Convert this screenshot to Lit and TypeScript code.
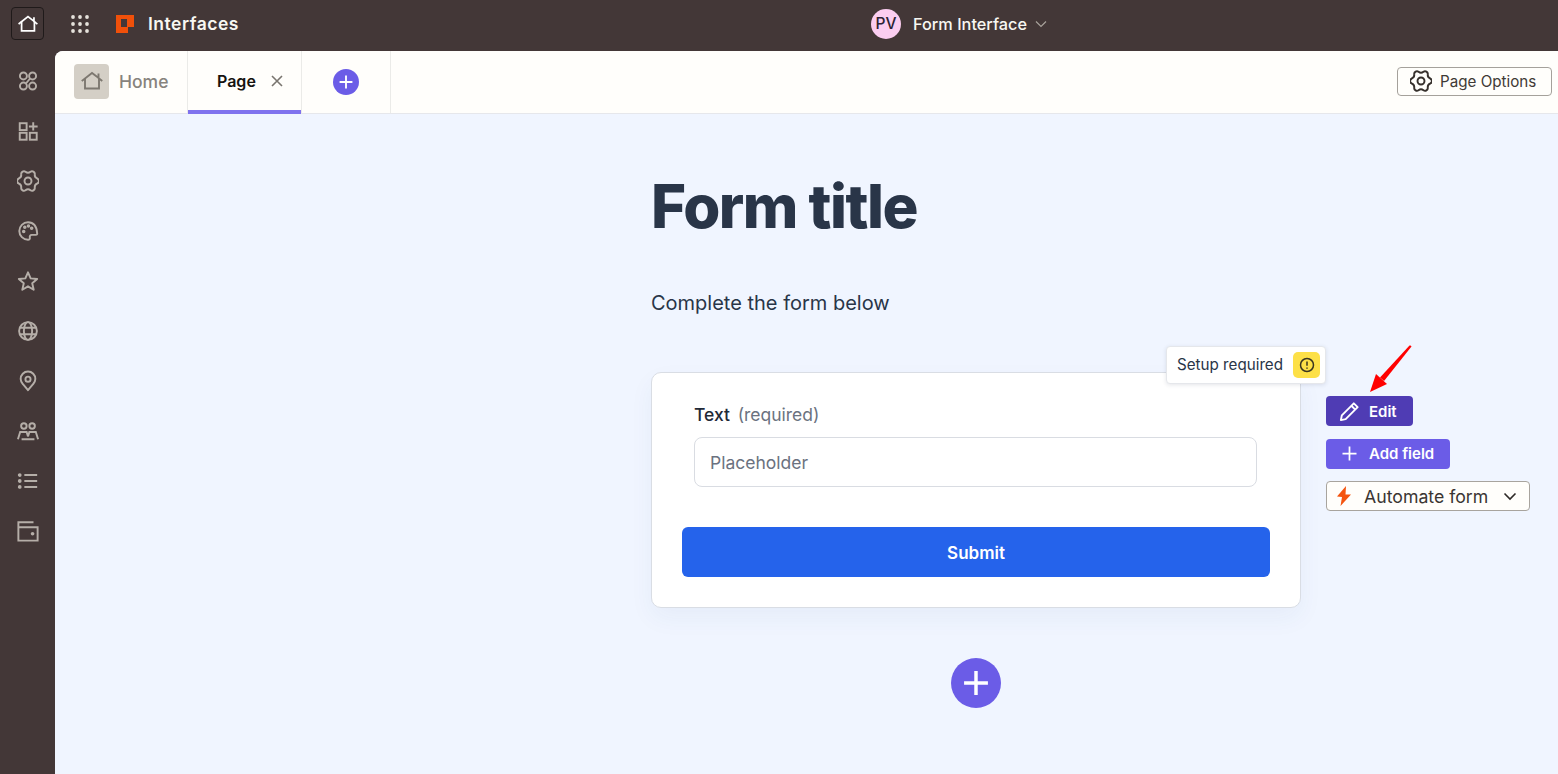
import { LitElement, html, css, svg } from "lit";
import { customElement } from "lit/decorators.js";

const house = html`<svg viewBox="0 0 24 24" fill="none" stroke="currentColor" stroke-width="1.900" stroke-linejoin="miter" stroke-linecap="square"><path d="M2.500 11.500 12 4l6 4.600M18.500 5.500v3.600L21.500 11.500" /><path d="M5 10v9.500h14V10" /></svg>`;

const polar = (deg: number, r: number) => {
  const a = (deg * Math.PI) / 180;
  return `${(12 + r * Math.cos(a)).toFixed(2)} ${(12 + r * Math.sin(a)).toFixed(2)}`;
};

const gearPath = () => {
  let d = `M${polar(-15, 10.5)}`;
  for (let i = 0; i < 6; i++) {
    const a = i * 60;
    d += ` A3 3 0 0 1 ${polar(a + 15, 10.5)} Q${polar(a + 30, 8)} ${polar(a + 45, 10.5)}`;
  }
  return d + "Z";
};

const gear = svg`<path d=${gearPath()} stroke-linejoin="round" /><circle cx="12" cy="12" r="3.800" />`;

const sideIcons = [
  svg`<circle cx="7" cy="6.500" r="3.800" /><circle cx="17" cy="6.500" r="3.800" /><circle cx="7" cy="17.500" r="3.800" /><circle cx="17" cy="17.500" r="3.800" /><path d="M9.500 15l5-6" />`,
  svg`<rect x="3" y="3.500" width="7.500" height="7.500" /><rect x="3" y="14" width="7.500" height="7.500" /><rect x="14" y="14" width="7.500" height="7.500" /><path d="M17.700 2.500v9M13 7h9.500" />`,
  gear,
  svg`<path d="M12 2.500a9.500 9.500 0 1 0 0 19c1.600 0 2.300-1 2-2.300-.4-1.600.4-3 2-3h4.700c1 0 1.500-.7 1.300-1.700C21.600 8.500 19 2.500 12 2.500z" /><circle cx="7.300" cy="12.500" r=".9" /><circle cx="8.500" cy="8" r=".9" /><circle cx="12.500" cy="6.500" r=".9" /><circle cx="16" cy="9" r=".9" />`,
  svg`<path d="M12 2.500l2.900 6.600 7.100.7-5.400 4.700 1.600 7-6.200-3.700-6.200 3.700 1.600-7L2 9.800l7.100-.7z" stroke-linejoin="round" />`,
  svg`<circle cx="12" cy="12" r="9.700" /><ellipse cx="12" cy="12" rx="4.500" ry="9.700" /><path d="M3 8.500h18M3 15.500h18" />`,
  svg`<path d="M12 22l-5.500-6.500a8 8 0 1 1 11 0L12 22z" stroke-linejoin="round" /><circle cx="12" cy="10" r="2.800" />`,
  svg`<circle cx="7.500" cy="6.500" r="3" /><circle cx="16.500" cy="6.500" r="3" /><path d="M1 21l2.500-8h7l1.500 5M5 21h7M23 21l-2.500-8h-7l-1.500 5M12 21h7" />`,
  svg`<path d="M8 5.500h14M8 12h14M8 18.500h14" /><circle cx="3" cy="5.500" r="1" fill="currentColor" /><circle cx="3" cy="12" r="1" fill="currentColor" /><circle cx="3" cy="18.500" r="1" fill="currentColor" />`,
  svg`<path d="M18 2.500H1.500v20h21V8H1.500" /><circle cx="17" cy="15" r="2" fill="currentColor" stroke="none" />`,
];

@customElement("app-root")
export class AppRoot extends LitElement {
  static styles = css`
    :host {
      display: grid;
      grid-template-columns: 55px 1fr;
      grid-template-rows: 51px 1fr;
      height: 774px;
      overflow: hidden;
      background: #433737;
      font-family: Inter, "Liberation Sans", sans-serif;
      color: #1f2937;
    }
    svg { display: block; }
    .top {
      grid-column: 1 / 3;
      display: grid;
      grid-template-columns: 860px auto;
      align-items: center;
      padding: 0 0 4px 11px;
    }
    .top-left { display: flex; align-items: center; }
    .home-btn {
      width: 33px; height: 33px; box-sizing: border-box;
      border: 1px solid #1f1a1a;
      border-radius: 4px;
      display: flex; align-items: center; justify-content: center;
      color: #fff;
    }
    .home-btn svg { width: 22px; height: 22px; }
    .grid-ic { margin-left: 27px; width: 18px; height: 18px; color: #e6e2dc; }
    .logo { margin-left: 27px; width: 18px; height: 18px; }
    .brand { margin-left: 14px; font-size: 17.500px; font-weight: 600; color: #f8f7f2; letter-spacing: .5px; }
    .top-mid { display: flex; align-items: center; }
    .avatar {
      width: 30px; height: 30px; border-radius: 50%;
      background: #fbcdf0; color: #2a2233;
      display: flex; align-items: center; justify-content: center;
      font-size: 15.500px; font-weight: 500;
    }
    .iface { margin-left: 12px; font-size: 16.300px; font-weight: 500; color: #f8f7f2; }
    .iface-chev { margin-left: 8px; width: 12px; height: 12px; color: #a8a29b; }
    .side {
      display: flex; flex-direction: column; align-items: center;
      padding-top: 19px; gap: 28px;
      color: #b5aea8;
    }
    .side svg { width: 22px; height: 22px; fill: none; stroke: currentColor; stroke-width: 2.100; }
    .main {
      background: #f0f5ff;
      border-top-left-radius: 8px;
      overflow: hidden;
      display: flex; flex-direction: column;
    }
    .tabs {
      height: 63px; box-sizing: border-box;
      background: #fffefb;
      border-bottom: 1px solid #e6e7eb;
      display: flex; align-items: stretch;
      flex: none;
    }
    .tab { display: flex; align-items: center; border-right: 1px solid #ebebe8; box-sizing: border-box; }
    .tab-home { width: 133px; padding: 0 0 2px 19px; gap: 10px; color: #87837d; font-size: 17.500px; font-weight: 500; }
    .home-ic {
      width: 35px; height: 35px; background: #d4cfc6; border-radius: 4px;
      display: flex; align-items: center; justify-content: center; color: #7d7870;
    }
    .home-ic svg { width: 24px; height: 24px; }
    .tab-page {
      width: 114px; padding: 0 0 3px 29px; gap: 15px;
      font-size: 16px; font-weight: 600; color: #16130f;
      box-shadow: inset 0 -4px 0 #7f72ee;
      margin-bottom: -1px;
    }
    .tab-page svg { width: 12px; height: 12px; color: #79756f; }
    .tab-add { width: 89px; justify-content: center; padding-bottom: 1px; }
    .tab-add .dot { width: 26px; height: 26px; }
    .dot {
      border-radius: 50%; background: #6b5ce7; color: #fff;
      display: flex; align-items: center; justify-content: center;
    }
    .tab-add .dot svg { width: 14px; height: 14px; }
    .spacer { flex: 1; }
    .opts-wrap { display: flex; align-items: center; padding: 0 6px 2px 0; }
    .opts {
      height: 29px; width: 155px; box-sizing: border-box;
      border: 1px solid #a5a19b; border-radius: 4px;
      display: flex; align-items: center; padding-left: 12px; gap: 8px;
      font-size: 15.200px; color: #3f3a36;
    }
    .opts svg { width: 22px; height: 22px; fill: none; stroke: #36302c; stroke-width: 2.100; }
    .content { padding-left: 596px; flex: 1; position: relative; }
    h1 {
      margin: 56px 0 0; font-size: 60px; line-height: 72px; font-weight: 800;
      letter-spacing: -1.500px; color: #293548;
    }
    .desc { margin: 47px 0 0; font-size: 20px; line-height: 28px; color: #293548; }
    .row { display: flex; gap: 25px; margin-top: 55px; align-items: flex-start; position: relative; }
    .card {
      width: 650px; height: 236px; box-sizing: border-box;
      background: #fff; border: 1px solid #d9dde4; border-radius: 10px;
      padding: 30px 30px 30px;
      box-shadow: 0 10px 24px rgba(40, 70, 130, .05);
      display: flex; flex-direction: column; position: relative;
    }
    .label { padding-left: 12px; font-size: 17.500px; line-height: 24px; font-weight: 500; color: #1f2937; }
    .req { margin-left: 3px; font-weight: 400; color: #6b7280; font-size: 17.500px; }
    .input {
      margin: 10px 13px 0 12px; height: 50px; box-sizing: border-box;
      border: 1px solid #d9dce2; border-radius: 8px;
      display: flex; align-items: center; padding-left: 15px;
      color: #6b7280; font-size: 17.500px;
    }
    .submit {
      margin-top: 40px; height: 50px; border-radius: 6px; box-sizing: border-box; padding-top: 2px;
      background: #2563eb; color: #fff;
      display: flex; align-items: center; justify-content: center;
      font-size: 17px; font-weight: 600;
    }
    .actions { display: flex; flex-direction: column; align-items: flex-start; padding-top: 24px; }
    .btn {
      height: 30px; border-radius: 4px; color: #fff; box-sizing: border-box;
      display: flex; align-items: center; font-size: 15px; font-weight: 600;
      padding-left: 12px; gap: 8px;
    }
    .btn svg { width: 23px; height: 23px; }
    .edit { width: 87px; background: #4f3cb4; }
    .add { width: 124px; background: #6b5ce7; margin-top: 13px; padding: 0 0 1px 13px; gap: 9px; }
    .add svg { width: 21px; height: 21px; }
    .auto {
      width: 204px; height: 30px; margin-top: 12px; box-sizing: border-box;
      border: 1px solid #a8a49e; border-radius: 4px; background: #fffefb;
      display: flex; align-items: center; padding-left: 9px;
      font-size: 17.700px; font-weight: 400; color: #3a3532;
    }
    .auto .bolt { width: 16px; height: 20px; margin-right: 12px; }
    .auto .chev { width: 14px; height: 14px; margin-left: 15px; color: #2d2926; }
    .pill {
      position: absolute; left: 515px; top: -26px;
      width: 160px; height: 38px; box-sizing: border-box;
      background: #fff; border: 1px solid #e5e7eb; border-radius: 4px;
      box-shadow: 0 1px 4px rgba(30, 40, 70, .12);
      display: flex; align-items: center; padding: 0 0 1px 10px;
      font-size: 15.200px; color: #293548;
    }
    .warn {
      position: absolute; right: 5px; top: 5px;
      width: 27px; height: 26px; border-radius: 5px; background: #fde047;
      display: flex; align-items: center; justify-content: center;
    }
    .warn svg { width: 16px; height: 16px; }
    .arrow { position: absolute; left: 716px; top: -28px; width: 46px; height: 50px; }
    .plus-wrap { width: 650px; display: flex; justify-content: center; margin-top: 50px; }
    .plus-wrap .dot { width: 50px; height: 50px; }
    .plus-wrap .dot svg { width: 26px; height: 26px; }
  `;

  render() {
    const plus = html`<svg viewBox="0 0 24 24" fill="none" stroke="currentColor" stroke-width="3.200"><path d="M12 1v22M1 12h22" /></svg>`;
    return html`
      <header class="top">
        <div class="top-left">
          <div class="home-btn">${house}</div>
          <svg class="grid-ic" viewBox="0 0 18 18" fill="currentColor">
            ${[2, 9, 16].flatMap((y) => [2, 9, 16].map((x) => svg`<circle cx=${x} cy=${y} r="1.900" />`))}
          </svg>
          <svg class="logo" viewBox="0 0 18 18">
            <path fill="#f0500a" fill-rule="evenodd" d="M0 0H18V12H12V18H0ZM5 4V12H11V4Z" />
          </svg>
          <span class="brand">Interfaces</span>
        </div>
        <div class="top-mid">
          <div class="avatar">PV</div>
          <span class="iface">Form Interface</span>
          <svg class="iface-chev" viewBox="0 0 12 12" fill="none" stroke="currentColor" stroke-width="1.200"><path d="M1 3.500l5 5 5-5" /></svg>
        </div>
      </header>
      <nav class="side">
        ${sideIcons.map((i) => html`<svg viewBox="0 0 24 24">${i}</svg>`)}
      </nav>
      <main class="main">
        <div class="tabs">
          <div class="tab tab-home"><div class="home-ic">${house}</div><span>Home</span></div>
          <div class="tab tab-page">
            <span>Page</span>
            <svg viewBox="0 0 12 12" fill="none" stroke="currentColor" stroke-width="1.600"><path d="M1 1l10 10M11 1L1 11" /></svg>
          </div>
          <div class="tab tab-add"><div class="dot">${plus}</div></div>
          <div class="spacer"></div>
          <div class="opts-wrap">
            <div class="opts"><svg viewBox="0 0 24 24">${gear}</svg><span>Page Options</span></div>
          </div>
        </div>
        <div class="content">
          <h1>Form title</h1>
          <p class="desc">Complete the form below</p>
          <div class="row">
            <div class="card">
              <div class="label">Text <span class="req">(required)</span></div>
              <div class="input">Placeholder</div>
              <div class="submit">Submit</div>
            </div>
            <div class="actions">
              <div class="btn edit">
                <svg viewBox="0 0 24 24" fill="none" stroke="currentColor" stroke-width="2" stroke-linejoin="round"><path d="M3 21l1-5L16.500 3.500l4 4L8 20z" /><path d="M14 6l4 4" /></svg>
                <span>Edit</span>
              </div>
              <div class="btn add">
                <svg viewBox="0 0 24 24" fill="none" stroke="currentColor" stroke-width="2"><path d="M12 4v16M4 12h16" /></svg>
                <span>Add field</span>
              </div>
              <div class="auto">
                <svg class="bolt" viewBox="0 0 16 20"><path fill="#f4540f" d="M10 0L1 10.500L6 11L4.500 20L15 8.500H9.500Z" /></svg>
                <span>Automate form</span>
                <svg class="chev" viewBox="0 0 14 14" fill="none" stroke="currentColor" stroke-width="1.600"><path d="M1.500 4.500L7 10l5.500-5.500" /></svg>
              </div>
            </div>
            <div class="pill">
              <span>Setup required</span>
              <div class="warn">
                <svg viewBox="0 0 16 16" fill="none" stroke="#3a3520" stroke-width="1.500"><circle cx="8" cy="8" r="6.500" /><path d="M8 4.500v4.200M8 10.500v1.300" /></svg>
              </div>
            </div>
            <svg class="arrow" viewBox="0 0 46 50">
              <path fill="#f00" d="M42.500 1.500Q44 1 44.500 2.500L17 37L13 33.500Z" />
              <path fill="#f00" d="M3 48L9 30L20 40Z" />
            </svg>
          </div>
          <div class="plus-wrap"><div class="dot">${plus}</div></div>
        </div>
      </main>
    `;
  }
}
